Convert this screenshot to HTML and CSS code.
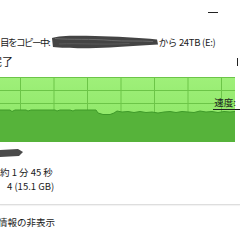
FILE: index.html
```html
<!DOCTYPE html>
<html lang="ja">
<head>
<meta charset="utf-8">
<link rel="stylesheet" href="styles.css">
</head>
<body>
<div class="dialog">
  <div class="titlebar"><span class="min"></span></div>
  <div class="row line1">
    <span class="txt narrow">目をコピー中</span><span class="txt">:</span>
    <svg class="blob" width="108" height="14" viewBox="0 0 110 14" preserveAspectRatio="none">
      <path d="M1 3 C8 0.5 25 0.5 45 1 C65 1.5 90 2.5 108 4.5 L109 9.5 C92 10.5 75 11.5 60 12.5 C40 13.5 15 13.5 2 12 Z" fill="#444444"/>
      <path d="M4 3.5 C20 5 40 3.5 62 5.5 C75 6.5 90 5.5 104 6.5" stroke="#6a6a6a" stroke-width="1" fill="none"/>
      <path d="M8 9 C28 8 50 10 80 8.5" stroke="#5a5a5a" stroke-width="1" fill="none"/>
    </svg>
    <span class="txt tight">から 24TB (E:)</span>
  </div>
  <div class="row line2">
    <span class="title">完了</span>
    <span class="pause"></span>
  </div>
  <div class="chart">
    <svg class="graph" width="235" height="65" viewBox="0 0 235 65">
      <defs>
        <linearGradient id="bg" x1="0" y1="0" x2="0" y2="1">
          <stop offset="0" stop-color="#9ff07a"/>
          <stop offset="1" stop-color="#88e460"/>
        </linearGradient>
      </defs>
      <rect x="0" y="0" width="235" height="65" fill="url(#bg)"/>
      <g stroke="#6cc548" stroke-width="1">
        <line x1="20.5" y1="0" x2="20.5" y2="65"/>
        <line x1="54" y1="0" x2="54" y2="65"/>
        <line x1="87.5" y1="0" x2="87.5" y2="65"/>
        <line x1="121" y1="0" x2="121" y2="65"/>
        <line x1="154.5" y1="0" x2="154.5" y2="65"/>
        <line x1="188" y1="0" x2="188" y2="65"/>
        <line x1="221.5" y1="0" x2="221.5" y2="65"/>
        <line x1="0" y1="0.5" x2="235" y2="0.5"/>
        <line x1="0" y1="13.5" x2="235" y2="13.5"/>
        <line x1="0" y1="26.5" x2="235" y2="26.5"/>
      </g>
      <path d="M0 33 L10 33 L12 34.5 L15 33 L26 33 L28 34 L31 33 L55 33 L57 34 L60 33 L70 33 L73 34 L75 33 L96 33 L98 36 L103 37.5 L110 37.5 L114 36 L117 34 L122 35 L128 34.5 L134 35.5 L140 34.5 L146 35.5 L152 35 L158 36 L164 35 L170 34.5 L176 35.5 L182 34.5 L188 35 L194 35.5 L200 34 L206 35 L212 34.5 L218 35.5 L224 34.5 L230 35 L235 34.5 L235 65 L0 65 Z" fill="#56b33a"/>
      <path d="M0 33 L10 33 L12 34.5 L15 33 L26 33 L28 34 L31 33 L55 33 L57 34 L60 33 L70 33 L73 34 L75 33 L96 33 L98 36 L103 37.5 L110 37.5 L114 36 L117 34 L122 35 L128 34.5 L134 35.5 L140 34.5 L146 35.5 L152 35 L158 36 L164 35 L170 34.5 L176 35.5 L182 34.5 L188 35 L194 35.5 L200 34 L206 35 L212 34.5 L218 35.5 L224 34.5 L230 35 L235 34.5" fill="none" stroke="#3e9a29" stroke-width="1"/>
    </svg>
    <span class="speed">速度:</span>
    <span class="speedline"></span>
  </div>
  <div class="row blobrow">
    <svg width="24" height="10" viewBox="0 0 24 10">
      <path d="M0 2 L18 1 L23 4 L19 8 L0 9 Z" fill="#4a4a4a"/>
    </svg>
  </div>
  <div class="row info first">約 1 分 45 秒</div>
  <div class="row info indent">4 (15.1 GB)</div>
  <div class="sep"></div>
  <div class="row more"><span class="cut">情報の非表示</span></div>
</div>
</body>
</html>
```
FILE: styles.css
```css
html, body {
  margin: 0;
  padding: 0;
  background: #ffffff;
}
body {
  font-family: "Noto Sans CJK JP", "Noto Sans", sans-serif;
  font-size: 9.5px;
  color: #1a1a1a;
  width: 240px;
  height: 240px;
  overflow: hidden;
}
.dialog {
  display: flex;
  flex-direction: column;
}
.titlebar {
  height: 34px;
  display: flex;
  justify-content: flex-end;
  align-items: flex-start;
  padding-right: 22px;
}
.min {
  margin-top: 12px;
  width: 10px;
  height: 1px;
  background: #222;
}
.row {
  display: flex;
  align-items: center;
}
.line1 {
  height: 16px;
  white-space: nowrap;
}
.narrow {
  letter-spacing: -1.5px;
}
.tight {
  letter-spacing: -0.3px;
}
.blob {
  margin-left: 0;
  margin-right: 0;
  flex: none;
}
.line2 {
  height: 27px;
  justify-content: space-between;
  align-items: flex-start;
}
.title {
  font-size: 11px;
  line-height: 14px;
  margin-left: -9px;
  margin-top: 4px;
}
.pause {
  width: 1px;
  height: 8px;
  background: #222;
  margin-right: 2px;
  margin-top: 8px;
}
.chart {
  position: relative;
  height: 65px;
  width: 240px;
}
.graph {
  display: block;
}
.speed {
  position: absolute;
  right: 4px;
  top: 19px;
  font-size: 9.5px;
  line-height: 12px;
}
.speedline {
  position: absolute;
  left: 213px;
  right: 0;
  top: 32px;
  height: 1px;
  background: #222;
}
.blobrow {
  height: 10px;
  margin-top: 6px;
}
.info {
  height: 14px;
  line-height: 14px;
}
.info.first {
  margin-top: 7px;
}
.indent {
  padding-left: 7px;
}
.sep {
  margin-top: 11px;
  height: 1px;
  background: #dedede;
  box-shadow: 0 1px 1px #f0f0f0;
}
.more {
  margin-top: 10px;
  height: 14px;
  overflow: hidden;
}
.cut {
  margin-left: -2px;
}
```
